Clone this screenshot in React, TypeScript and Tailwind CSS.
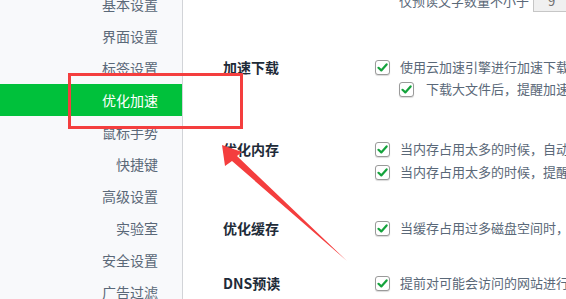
import React from 'react';

const font = { fontFamily: '"Noto Sans CJK SC", "Noto Sans", sans-serif' };

const menu = ['基本设置', '界面设置', '标签设置', '优化加速', '鼠标手势', '快捷键', '高级设置', '实验室', '安全设置', '广告过滤'];

function Check() {
  return (
    <span className="flex h-[15px] w-[15px] shrink-0 items-center justify-center rounded-[3px] border border-[#9a9a9a] bg-white shadow-[0_1px_1px_rgba(0,0,0,0.15)]">
      <svg width="11" height="11" viewBox="0 0 11 11">
        <path d="M1.5 5.8 L4.3 8.4 L9.6 2.4" fill="none" stroke="#14a33c" strokeWidth="2.2" strokeLinecap="round" strokeLinejoin="round" />
      </svg>
    </span>
  );
}

function Option({ text, sub }: { text: string; sub?: boolean }) {
  return (
    <div className={`flex h-[22px] items-center ${sub ? 'gap-[12px] pl-[24px]' : 'gap-[10px]'}`}>
      <Check />
      <span className="whitespace-nowrap text-[13px] text-[#5a6878]">{text}</span>
    </div>
  );
}

function Section({ title, className, children }: { title: string; className: string; children: React.ReactNode }) {
  return (
    <div className={`flex ${className}`}>
      <div className="flex h-[22px] w-[152px] shrink-0 items-center text-[14px] font-bold text-[#1e2b38]">{title}</div>
      <div className="flex flex-col">{children}</div>
    </div>
  );
}

export default function App() {
  return (
    <div className="relative flex h-[299px] w-[566px] overflow-hidden bg-white" style={font}>
      <aside className="w-[183px] shrink-0 border-r border-[#d2d4d8] bg-[#f8f9fb]">
        <div className="-mt-[12px] flex flex-col">
          {menu.map((m) => (
            <div
              key={m}
              className={`flex h-[32px] items-center justify-end pr-[24px] text-[14px] ${m === '优化加速' ? 'bg-[#00c13b] text-white' : 'text-[#5a6878]'}`}
            >
              {m}
            </div>
          ))}
        </div>
      </aside>

      <main className="flex-1 pl-[40px]">
        <div className="-mt-[10px] flex h-[22px] items-center pl-[176px]">
          <span className="whitespace-nowrap text-[13px] text-[#5a6878]">仅预读文字数量不小于</span>
          <span className="ml-[4px] flex h-[22px] w-[50px] shrink-0 items-center border border-[#c6c6c6] bg-[#f0f0f0] pl-[14px] text-[13px] text-[#707070]">9</span>
        </div>

        <Section title="加速下载" className="mt-[44px]">
          <Option text="使用云加速引擎进行加速下载" />
          <Option text="下载大文件后，提醒加速" sub />
        </Section>

        <Section title="优化内存" className="mt-[38px]">
          <Option text="当内存占用太多的时候，自动" />
          <div className="h-px" />
          <Option text="当内存占用太多的时候，提醒" />
        </Section>

        <Section title="优化缓存" className="mt-[34px]">
          <Option text="当缓存占用过多磁盘空间时，" />
        </Section>

        <Section title="DNS预读" className="mt-[33px]">
          <Option text="提前对可能会访问的网站进行" />
        </Section>
      </main>

      <div className="absolute left-[68px] top-[73px] h-[56px] w-[175px] border-[3px] border-[#f43e3e]" />
      <svg className="absolute left-0 top-0" width="566" height="299" viewBox="0 0 566 299">
        <polygon points="222,145 225,166 232,161 347,261 237,156 242,152" fill="#f43e3e" />
      </svg>
    </div>
  );
}
